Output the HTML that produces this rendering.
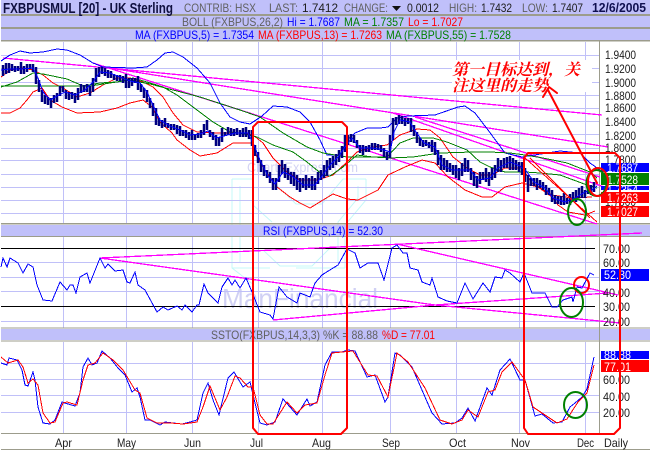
<!DOCTYPE html>
<html><head><meta charset="utf-8"><title>FXBPUSMUL</title>
<style>
html,body{margin:0;padding:0;background:#fff;width:650px;height:450px;overflow:hidden}
svg{display:block}
text{font-family:"Liberation Sans",Arial,sans-serif;font-size:12px}
.g{fill:#606060}.k{fill:#202020}.b{fill:#0000ff}.gr{fill:#008000}.r{fill:#ff0000}.w{fill:#fff}
.l{fill:none;stroke-linejoin:round;stroke-linecap:round}
.a{fill:none;shape-rendering:crispEdges}
</style></head><body>
<svg width="650" height="450" viewBox="0 0 650 450" xmlns="http://www.w3.org/2000/svg">
<rect width="650" height="450" fill="#fff"/>

<!-- watermark -->
<text x="247" y="172" textLength="111" lengthAdjust="spacingAndGlyphs" style="font-size:14px" fill="#d4d4f4">ChartsExpress.com</text>
<g fill="none" stroke="#c4f8f8" stroke-width="1">
<path d="M232 179H253V205L272 222M232 179V268L254 285M366 179V200L345 225V268M366 179H343L322 204H296L272 181M240 186V262M358 186V198L338 222V262M263 250L280 266H312L330 248M232 268H270M296 268H345"/>
</g>
<text x="222" y="308" textLength="156" lengthAdjust="spacingAndGlyphs" style="font-size:28px" fill="#d0d0f4">ManFinancial</text>

<!-- grid -->
<g stroke="#c0c0f8" stroke-width="1" fill="none" shape-rendering="crispEdges">
<path d="M1 55.5H599M1 68.5H599M1 82.5H599M1 95.5H599M1 108.5H599M1 121.5H599M1 134.5H599M1 148.5H599M1 160.5H599M1 174.5H599M1 187.5H599M1 200.5H599M1 213.5H599"/>
<path d="M1 262.5H599M1 277.5H599M1 291.5H599M1 321.5H599"/>
<path d="M1 363.5H599M1 379.5H599M1 395.5H599M1 412.5H599"/>
<path d="M63.5 42V223M126.5 42V223M192.5 42V223M258.5 42V223M322.5 42V223M390.5 42V223M456.5 42V223M519.5 42V223M585.5 42V223"/>
<path d="M63.5 237V328M126.5 237V328M192.5 237V328M258.5 237V328M322.5 237V328M390.5 237V328M456.5 237V328M519.5 237V328M585.5 237V328"/>
<path d="M63.5 342V433M126.5 342V433M192.5 342V433M258.5 342V433M322.5 342V433M390.5 342V433M456.5 342V433M519.5 342V433M585.5 342V433"/>
</g>
<rect x="452" y="60" width="140" height="32" fill="#fff"/>

<!-- header bars -->
<g fill="#c0c0fa">
<rect x="1" y="0" width="649" height="14"/>
<rect x="1" y="16" width="649" height="11"/>
<rect x="1" y="29" width="649" height="11"/>
<rect x="1" y="225" width="649" height="11"/>
<rect x="1" y="329" width="649" height="11"/>
</g>
<g fill="#9c9c8c" shape-rendering="crispEdges">
<rect x="1" y="14" width="649" height="2"/>
<rect x="1" y="27" width="649" height="2"/>
<rect x="1" y="40" width="649" height="1.5"/>
<rect x="1" y="223" width="649" height="1.5"/>
<rect x="1" y="236" width="649" height="1"/>
<rect x="1" y="327.5" width="649" height="1"/>
<rect x="1" y="340.5" width="649" height="1"/>
<rect x="1" y="433" width="599" height="1"/>
<rect x="1" y="449" width="649" height="1"/>
<rect x="599" y="41" width="1" height="392"/>
</g>

<text x="3" y="13" textLength="170" lengthAdjust="spacingAndGlyphs" style="font-size:15px;font-weight:bold" fill="#101040">FXBPUSMUL [20] - UK Sterling</text>
<text x="184" y="12" textLength="48" lengthAdjust="spacingAndGlyphs" class="g">CONTRIB:</text>
<text x="235" y="12" textLength="21" lengthAdjust="spacingAndGlyphs" class="g">HSX</text>
<text x="269" y="12" textLength="29" lengthAdjust="spacingAndGlyphs" class="g">LAST:</text>
<text x="302" y="12" textLength="36" lengthAdjust="spacingAndGlyphs" class="k">1.7412</text>
<text x="344" y="12" textLength="44" lengthAdjust="spacingAndGlyphs" class="g">CHANGE:</text>
<path d="M392 6H401L396.5 11Z" fill="#101010"/>
<text x="407" y="12" textLength="32" lengthAdjust="spacingAndGlyphs" class="k">0.0012</text>
<text x="449" y="12" textLength="28" lengthAdjust="spacingAndGlyphs" class="g">HIGH:</text>
<text x="481" y="12" textLength="31" lengthAdjust="spacingAndGlyphs" class="k">1.7432</text>
<text x="522" y="12" textLength="26" lengthAdjust="spacingAndGlyphs" class="g">LOW:</text>
<text x="552" y="12" textLength="31" lengthAdjust="spacingAndGlyphs" class="k">1.7407</text>
<text x="592" y="12" textLength="54" lengthAdjust="spacingAndGlyphs" style="font-size:13px;font-weight:bold" fill="#101050">12/6/2005</text>

<text x="182" y="26" textLength="101" lengthAdjust="spacingAndGlyphs" class="g">BOLL (FXBPUS,26,2)</text>
<text x="287" y="26" textLength="53" lengthAdjust="spacingAndGlyphs" class="b">Hi = 1.7687</text>
<text x="344" y="26" textLength="60" lengthAdjust="spacingAndGlyphs" class="gr">MA = 1.7357</text>
<text x="408" y="26" textLength="55" lengthAdjust="spacingAndGlyphs" class="r">Lo = 1.7027</text>

<text x="135" y="39" textLength="119" lengthAdjust="spacingAndGlyphs" class="b">MA (FXBPUS,5) = 1.7354</text>
<text x="258" y="39" textLength="124" lengthAdjust="spacingAndGlyphs" class="r">MA (FXBPUS,13) = 1.7263</text>
<text x="386" y="39" textLength="125" lengthAdjust="spacingAndGlyphs" class="gr">MA (FXBPUS,55) = 1.7528</text>

<text x="263" y="235" textLength="120" lengthAdjust="spacingAndGlyphs" class="b">RSI (FXBPUS,14) = 52.30</text>
<text x="211" y="339" textLength="109" lengthAdjust="spacingAndGlyphs" class="g">SSTO(FXBPUS,14,3,3)</text>
<text x="323" y="339" textLength="55" lengthAdjust="spacingAndGlyphs" class="g">%K = 88.88</text>
<text x="382" y="339" textLength="53" lengthAdjust="spacingAndGlyphs" class="r">%D = 77.01</text>

<!-- main chart: magenta trendlines -->
<g class="a" stroke="#ff00ff" stroke-width="1.3">
<path d="M3 58L602 115"/>
<path d="M110 68L608 147"/>
<path d="M93 63L597 224"/>
<path d="M393 113L607 188"/>
<path d="M415 117L600 177"/>
</g>

<!-- bands and MAs -->
<g class="a" stroke-width="1">
<polyline stroke="#0000ff" points="1,61 10,55 20,51 30,53 43,52 57,49 67,50 80,55 93,63 103,67 133,68 147,67 157,60 165,53 173,52 183,57 197,68 210,83 220,103 230,117 240,122 250,124 262,116 273,106 287,107 300,112 310,122 320,140 327,155 340,155 347,140 355,133 367,128 380,128 388,127 397,118 408,116 435,115 458,107 465,106 475,113 488,130 505,153 522,157 547,153 560,151 580,153 590,163 600,170"/>
<polyline stroke="#ff0000" points="1,113 10,113 20,108 27,100 33,92 42,88 50,100 62,107 77,113 100,112 117,108 130,103 143,100 152,107 160,122 172,133 177,140 190,150 200,156 217,153 233,143 252,143 257,157 267,173 277,187 290,197 300,203 310,208 323,200 333,194 347,199 358,200 378,190 388,175 405,167 422,160 435,163 448,177 465,190 482,197 492,197 505,187 522,183 538,187 552,197 558,205 568,212 585,215 595,211"/>
<polyline stroke="#ff0000" points="1,77 10,70 23,68 33,70 43,75 53,83 63,88 77,97 90,93 103,85 117,78 130,78 143,82 153,87 163,97 173,113 183,125 197,132 217,133 240,133 253,135 263,143 273,158 287,172 300,180 317,180 333,175 347,162 357,152 373,147 387,145 400,135 417,129 430,130 440,138 453,157 467,168 480,175 492,175 505,168 522,168 532,183 552,195 572,198 592,197"/>
<polyline stroke="#008000" points="1,87 17,82 33,73 43,74 67,79 83,86 100,83 117,82 133,78 147,82 163,87 177,95 197,110 213,122 230,132 240,133 257,137 273,145 293,152 307,162 323,175 330,176 343,167 357,155 373,157 387,157 400,143 413,138 433,138 447,142 467,150 480,162 490,167 505,172 525,172 540,173 560,175 587,185 597,188"/>
<polyline stroke="#008000" points="1,86 40,86 90,86 130,80 150,84 200,97 240,110 260,117 283,133 307,147 323,153 347,157 373,157 390,158 413,157 440,153 473,152 490,152 510,153 525,155 543,158 567,163 590,172 597,178"/>
</g>

<!-- candles -->
<path stroke="#000080" stroke-width="2.5" fill="none" d="M3 65V76M6 63V74M9 63V73M12 64V71M15 66V72M18 66V71M21 62V74M24 66V74M27 64V72M30 64V69M33 64V72M36 67V84M39 80V92M42 90V102M45 95V104M48 97V105M51 98V108M54 95V103M57 93V102M60 86V96M63 86V92M66 90V99M69 92V100M72 92V99M75 93V103M78 88V100M81 84V93M84 85V92M87 84V92M90 86V96M93 78V92M96 68V82M99 67V77M102 67V74M105 68V76M108 70V78M111 71V78M114 74V80M117 75V81M120 75V81M123 76V83M126 74V88M129 78V88M132 78V86M135 78V83M138 76V90M141 84V92M144 88V98M147 90V102M150 98V108M153 103V116M156 108V125M159 118V126M162 120V128M165 118V127M168 123V128M171 124V130M174 124V130M177 125V134M180 126V136M183 130V136M186 130V138M189 132V140M192 130V140M195 134V140M198 133V138M201 130V138M204 124V135M207 120V130M210 130V137M213 132V140M216 135V146M219 137V146M222 128V142M225 132V136M228 127V135M231 128V136M234 129V136M237 128V135M240 130V137M243 128V137M246 127V137M249 130V139M252 130V146M255 145V156M258 152V163M261 160V172M264 165V176M267 170V178M270 172V183M273 178V190M276 178V190M279 165V182M282 160V174M285 164V178M288 168V180M291 172V184M294 172V186M297 175V190M300 178V192M303 178V188M306 175V190M309 178V188M312 176V190M315 178V190M318 172V184M321 170V180M324 165V178M327 160V176M330 158V170M333 156V168M336 154V165M339 150V162M342 146V158M345 135V152M348 135V145M351 134V142M354 135V143M357 140V148M360 145V153M363 145V155M366 146V152M369 145V152M372 143V150M375 143V150M378 144V150M381 145V152M384 148V157M387 152V160M390 135V158M393 118V140M396 117V125M399 115V124M402 116V124M405 118V126M408 118V124M411 118V132M414 125V136M417 132V143M420 138V146M423 140V147M426 140V146M429 142V148M432 140V152M435 142V155M438 150V165M441 155V170M444 158V170M447 160V172M450 163V172M453 165V175M456 165V178M459 168V180M462 163V176M465 158V172M468 160V172M471 168V180M474 172V186M477 176V188M480 172V184M483 172V180M486 168V182M489 172V186M492 168V180M495 165V178M498 158V172M501 160V172M504 158V168M507 157V168M510 156V170M513 158V170M516 160V170M519 162V172M522 162V175M525 168V182M528 175V192M531 178V186M534 178V186M537 178V190M540 180V188M543 182V190M546 185V195M549 188V195M552 190V202M555 195V204M558 196V204M561 196V205M564 193V205M567 198V204M570 194V205M573 192V202M576 190V202M579 188V198M582 186V198M585 190V198M588 188V194M591 185V195M594 182V192"/>
<polyline class="a" stroke="#0000ff" stroke-width="1" points="1,70 10,69 20,69 33,68 38,78 43,92 50,100 57,96 65,92 75,95 85,90 93,82 100,72 110,73 120,77 130,81 140,83 147,92 153,105 160,120 170,126 180,130 190,135 200,134 208,131 216,138 224,136 235,133 248,133 254,145 260,160 268,176 275,184 283,172 292,176 303,185 315,185 322,176 330,165 338,157 345,147 352,138 360,148 372,148 384,150 390,152 394,132 400,120 410,122 416,132 424,143 435,147 442,165 452,170 462,170 470,170 478,180 490,178 498,168 510,162 520,166 527,172 534,182 545,188 553,198 565,202 575,198 585,192 592,190 597,186"/>

<!-- RSI panel -->
<g stroke="#000" stroke-width="1" shape-rendering="crispEdges">
<path d="M1 248.5H595M1 306.5H595"/>
</g>
<g class="a" stroke="#ff00ff" stroke-width="1.3">
<path d="M100 258L642 233"/>
<path d="M100 258L435 305L620 323"/>
<path d="M397 244L618 295"/>
<path d="M273 320L435 305L608 293"/>
</g>
<polyline class="a" stroke="#0000ff" stroke-width="1" points="1,267 3,258 7,267 10,258 18,263 23,273 28,264 33,267 37,285 43,300 52,301 60,282 67,290 70,285 73,285 76,293 80,277 87,273 90,283 100,258 105,268 108,264 115,271 123,270 127,282 130,283 135,272 138,285 145,290 157,312 163,307 168,310 177,306 182,310 185,305 192,312 197,305 199,305 204,284 208,293 218,303 222,287 228,278 232,285 235,280 240,288 246,278 252,292 260,312 270,315 273,319 279,287 287,297 297,303 300,293 305,295 310,297 315,283 322,275 325,273 338,265 347,249 355,253 360,268 368,263 378,263 384,280 392,248 397,245 403,253 407,253 410,268 418,270 422,282 430,285 432,278 438,297 447,301 457,303 465,283 473,299 483,283 490,292 495,277 502,278 505,270 510,273 520,282 524,273 532,293 545,293 552,307 557,307 563,300 572,297 573,302 577,287 582,288 590,273 594,275"/>

<!-- Stoch panel -->
<polyline class="a" stroke="#0000ff" stroke-width="1" points="1,363 7,365 9,358 17,360 22,370 25,385 28,386 33,372 35,380 38,407 43,423 50,424 55,420 62,402 68,404 75,406 80,393 83,367 88,358 92,365 97,363 102,351 110,358 118,368 125,375 132,392 137,388 140,397 145,420 150,420 160,425 165,422 173,423 182,424 190,422 197,420 203,393 208,383 213,400 219,415 228,378 234,372 243,387 250,382 255,403 260,423 267,425 275,422 283,399 290,407 297,415 307,399 310,406 317,402 325,365 332,352 342,352 348,350 355,351 367,377 375,375 385,402 388,397 395,353 400,355 412,367 425,397 432,413 442,424 455,423 462,418 468,408 475,421 487,388 492,395 500,370 510,359 520,380 525,380 535,416 542,414 553,423 562,422 570,407 575,403 582,397 587,389 594,357"/>
<polyline class="a" stroke="#ff0000" stroke-width="1" points="1,357 8,363 18,360 23,367 28,383 33,379 38,385 43,413 50,423 55,422 63,403 67,402 77,405 83,380 88,365 95,363 103,353 113,360 123,370 135,390 140,393 147,418 157,423 170,423 183,424 197,422 203,407 210,386 220,410 227,397 235,376 240,378 248,387 253,387 260,415 267,424 273,424 287,402 297,413 305,405 317,403 325,375 332,353 342,352 353,351 368,375 377,376 388,397 397,353 408,362 425,388 440,420 452,424 462,420 468,410 478,417 488,392 495,390 502,372 512,362 525,380 533,407 545,415 557,423 567,419 578,402 587,393 594,365"/>

<!-- right scale -->
<g class="k">
<text x="605" y="59" textLength="31" lengthAdjust="spacingAndGlyphs">1.9400</text>
<text x="605" y="73" textLength="31" lengthAdjust="spacingAndGlyphs">1.9200</text>
<text x="605" y="87" textLength="31" lengthAdjust="spacingAndGlyphs">1.9000</text>
<text x="605" y="100" textLength="31" lengthAdjust="spacingAndGlyphs">1.8800</text>
<text x="605" y="112" textLength="31" lengthAdjust="spacingAndGlyphs">1.8600</text>
<text x="605" y="126" textLength="31" lengthAdjust="spacingAndGlyphs">1.8400</text>
<text x="605" y="140" textLength="31" lengthAdjust="spacingAndGlyphs">1.8200</text>
<text x="605" y="152" textLength="31" lengthAdjust="spacingAndGlyphs">1.8000</text>
<text x="605" y="164" textLength="31" lengthAdjust="spacingAndGlyphs">1.7800</text>
<text x="605" y="206" textLength="31" lengthAdjust="spacingAndGlyphs">1.7000</text>
<text x="603" y="253" textLength="27" lengthAdjust="spacingAndGlyphs">70.00</text>
<text x="603" y="267" textLength="27" lengthAdjust="spacingAndGlyphs">60.00</text>
<text x="603" y="297" textLength="27" lengthAdjust="spacingAndGlyphs">40.00</text>
<text x="603" y="311" textLength="27" lengthAdjust="spacingAndGlyphs">30.00</text>
<text x="603" y="326" textLength="27" lengthAdjust="spacingAndGlyphs">20.00</text>
<text x="603" y="384" textLength="27" lengthAdjust="spacingAndGlyphs">60.00</text>
<text x="603" y="401" textLength="27" lengthAdjust="spacingAndGlyphs">40.00</text>
<text x="603" y="417" textLength="27" lengthAdjust="spacingAndGlyphs">20.00</text>
</g>
<rect x="601" y="186" width="48" height="4" fill="#0000ff"/>
<text x="607" y="194" textLength="31" lengthAdjust="spacingAndGlyphs" class="w">1.7354</text>
<rect x="601" y="163" width="48" height="9" fill="#0000ff"/>
<rect x="601" y="173" width="48" height="12" fill="#008000"/>
<rect x="601" y="190" width="48" height="3" fill="#fff"/>
<rect x="601" y="192" width="48" height="11" fill="#ff0000"/>
<rect x="601" y="206" width="48" height="11" fill="#ff0000"/>
<rect x="601" y="269" width="48" height="12" fill="#0000ff"/>
<rect x="601" y="351" width="48" height="8" fill="#0000ff"/>
<rect x="601" y="360" width="48" height="12" fill="#ff0000"/>
<g class="w">
<text x="607" y="172" textLength="31" lengthAdjust="spacingAndGlyphs">1.7687</text>
<text x="607" y="184" textLength="31" lengthAdjust="spacingAndGlyphs">1.7528</text>
<text x="607" y="202" textLength="31" lengthAdjust="spacingAndGlyphs">1.7263</text>
<text x="607" y="216" textLength="31" lengthAdjust="spacingAndGlyphs">1.7027</text>
<text x="604" y="279" textLength="27" lengthAdjust="spacingAndGlyphs">52.30</text>
<text x="604" y="359" textLength="27" lengthAdjust="spacingAndGlyphs">88.88</text>
<text x="604" y="371" textLength="27" lengthAdjust="spacingAndGlyphs">77.01</text>
</g>

<!-- month labels -->
<g class="k">
<text x="55" y="447" textLength="17" lengthAdjust="spacingAndGlyphs">Apr</text>
<text x="117" y="447" textLength="19" lengthAdjust="spacingAndGlyphs">May</text>
<text x="184" y="447" textLength="17" lengthAdjust="spacingAndGlyphs">Jun</text>
<text x="250" y="447" textLength="13" lengthAdjust="spacingAndGlyphs">Jul</text>
<text x="312" y="447" textLength="19" lengthAdjust="spacingAndGlyphs">Aug</text>
<text x="382" y="447" textLength="18" lengthAdjust="spacingAndGlyphs">Sep</text>
<text x="449" y="447" textLength="17" lengthAdjust="spacingAndGlyphs">Oct</text>
<text x="511" y="447" textLength="19" lengthAdjust="spacingAndGlyphs">Nov</text>
<text x="577" y="447" textLength="17" lengthAdjust="spacingAndGlyphs">Dec</text>
<text x="604" y="447" textLength="24" lengthAdjust="spacingAndGlyphs">Daily</text>
</g>

<!-- annotations -->
<g class="l" stroke="#ff0000" stroke-width="2">
<path d="M253 428V127L258 122H342L347 127V428L341 434H258L253 428Z"/>
<path d="M524 428V158L528 153H615L620 158V428L614 434H528L524 428Z"/>
<path d="M548 90L597 183"/>
<path d="M543 97L549 87L557 93"/>
</g>
<g class="a" stroke="#ff0000" stroke-width="1">
<path d="M525 158L597 222"/>
<path d="M530 158L590 218"/>
</g>
<g fill="none" stroke-width="2">
<ellipse cx="577" cy="212" rx="9" ry="13" stroke="#008000"/>
<ellipse cx="596.5" cy="183" rx="10" ry="13" stroke="#008000"/>
<ellipse cx="598" cy="182" rx="10" ry="14" stroke="#ff0000"/>
<ellipse cx="581.5" cy="285" rx="7.5" ry="8" stroke="#ff0000"/>
<ellipse cx="571.5" cy="302.5" rx="11.5" ry="14.5" stroke="#008000"/>
<ellipse cx="575.5" cy="405" rx="11.5" ry="13" stroke="#008000"/>
</g>
<text x="452" y="75" textLength="128" style="font-family:'Liberation Sans','Noto Serif CJK SC',serif;font-size:16px;font-style:italic;font-weight:bold" fill="#ff0000">第一目标达到，关</text>
<text x="452" y="91" textLength="96" style="font-family:'Liberation Sans','Noto Serif CJK SC',serif;font-size:16px;font-style:italic;font-weight:bold" fill="#ff0000">注这里的走势</text>
</svg>
</body></html>
